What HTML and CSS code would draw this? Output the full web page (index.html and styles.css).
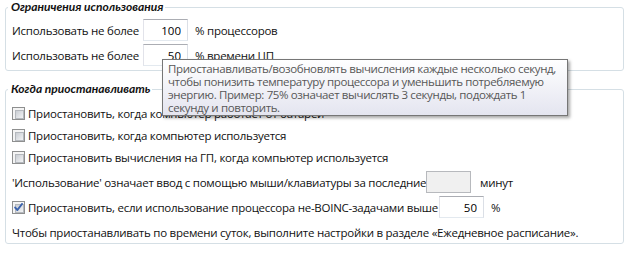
FILE: index.html
```html
<!doctype html>
<html>
<head>
	<title>Ограничения использования</title>
	<meta charset="utf-8">
	<link rel="stylesheet" href="styles.css">
</head>
<body>
	<fieldset class="group limits">
		<legend>Ограничения использования</legend>
		<div class="row">
			<span class="label">Использовать не более</span>
			<input class="num" type="text" value="100">
			<span class="unit">% процессоров</span>
		</div>
		<div class="row spaced">
			<span class="label">Использовать не более</span>
			<input class="num" type="text" value="50">
			<span class="unit">% времени ЦП</span>
		</div>
	</fieldset>

	<fieldset class="group suspend">
		<legend>Когда приостанавливать</legend>
		<label class="row"><span class="box"></span>Приостановить, когда компьютер работает от батарей</label>
		<label class="row"><span class="box"></span>Приостановить, когда компьютер используется</label>
		<label class="row"><span class="box"></span>Приостановить вычисления на ГП, когда компьютер используется</label>
		<div class="row spaced">
			<span class="label idle">'Использование' означает ввод с помощью мыши/клавиатуры за последние</span>
			<input class="num" type="text" value="" disabled>
			<span class="unit minutes">минут</span>
		</div>
		<div class="row spaced">
			<label class="label cpu"><span class="box checked">
				<svg viewBox="0 0 9 9" width="9" height="9"><path d="M1.2 4.6 L3.4 7 L8 1" /></svg>
			</span>Приостановить, если использование процессора не-BOINC-задачами выше</label>
			<input class="num" type="text" value="50">
			<span class="unit">%</span>
		</div>
		<div class="row spaced">Чтобы приостанавливать по времени суток, выполните настройки в разделе «Ежедневное расписание».</div>
	</fieldset>

	<div class="tooltip">
		Приостанавливать/возобновлять вычисления каждые несколько секунд,<br>
		чтобы понизить температуру процессора и уменьшить потребляемую<br>
		энергию. Пример: 75% означает вычислять 3 секунды, подождать 1<br>
		секунду и повторить.
	</div>
</body>
</html>
```

FILE: styles.css
```css
* {
	box-sizing: border-box;
}
body {
	margin: 0px 3px 0px 5px;
	background: white;
	color: #111;
	font-family: 'Open Sans', 'Noto Sans', sans-serif;
	font-size: 11.5px;
	letter-spacing: -0.25px;
}

.group {
	margin: 0px;
	padding: 5px 6px 4px 6px;
	border: 1px solid #d5dfe5;
	border-radius: 3px;
	min-width: 0px;
}
.group legend {
	margin-left: -4px;
	padding: 0px 2px 0px 3px;
	height: 14px;
	font-family: Lato, 'Open Sans', sans-serif;
	font-size: 12px;
	line-height: 14px;
	font-weight: bold;
	font-style: italic;
	letter-spacing: 0px;
	color: #111;
}
.group.suspend {
	margin-top: 11px;
	padding: 6px 6px 0px 6px;
}

.row {
	display: flex;
	align-items: center;
	height: 22px;
	white-space: nowrap;
}
.row.spaced {
	margin-top: 3px;
}
.label {
	display: flex;
	align-items: center;
	width: 131px;
}
.label.idle {
	width: 414px;
}
.label.cpu {
	width: 427px;
}
.unit {
	margin-left: 7px;
}
.unit.minutes {
	margin-left: 9px;
}

.num {
	width: 45px;
	height: 22px;
	margin: 0px;
	padding: 0px 6px;
	border: 1px solid;
	border-color: #abadb3 #dbdfe6 #e3e9ef #e2e3ea;
	background: white;
	color: #000;
	font: inherit;
	letter-spacing: 0px;
	text-align: right;
	outline: none;
}
.num:disabled {
	background: #f0f0f0;
	border-color: #b7b9bd;
}

.box {
	position: relative;
	display: inline-block;
	flex: none;
	width: 13px;
	height: 13px;
	margin-right: 3px;
	padding: 2px;
	border: 1px solid #8e8f8f;
	background: #f4f4f4;
}
.box::before {
	content: '';
	display: block;
	width: 7px;
	height: 7px;
	border: 1px solid #b4b8bd;
	background: linear-gradient(135deg, #c9cdd3, #f2f3f4);
}
.box svg {
	position: absolute;
	left: 1px;
	top: 1px;
}
.box svg path {
	fill: none;
	stroke: #3b63ad;
	stroke-width: 2;
	stroke-linecap: round;
	stroke-linejoin: round;
}

.tooltip {
	position: absolute;
	left: 162px;
	top: 59px;
	width: 406px;
	padding: 2px 5px 1px 5px;
	border: 1px solid #767676;
	background: linear-gradient(#ffffff, #e4e5f0);
	box-shadow: 2px 2px 3px rgba(0, 0, 0, 0.35);
	color: #575757;
	line-height: 13px;
	letter-spacing: -0.37px;
	white-space: nowrap;
}
```
